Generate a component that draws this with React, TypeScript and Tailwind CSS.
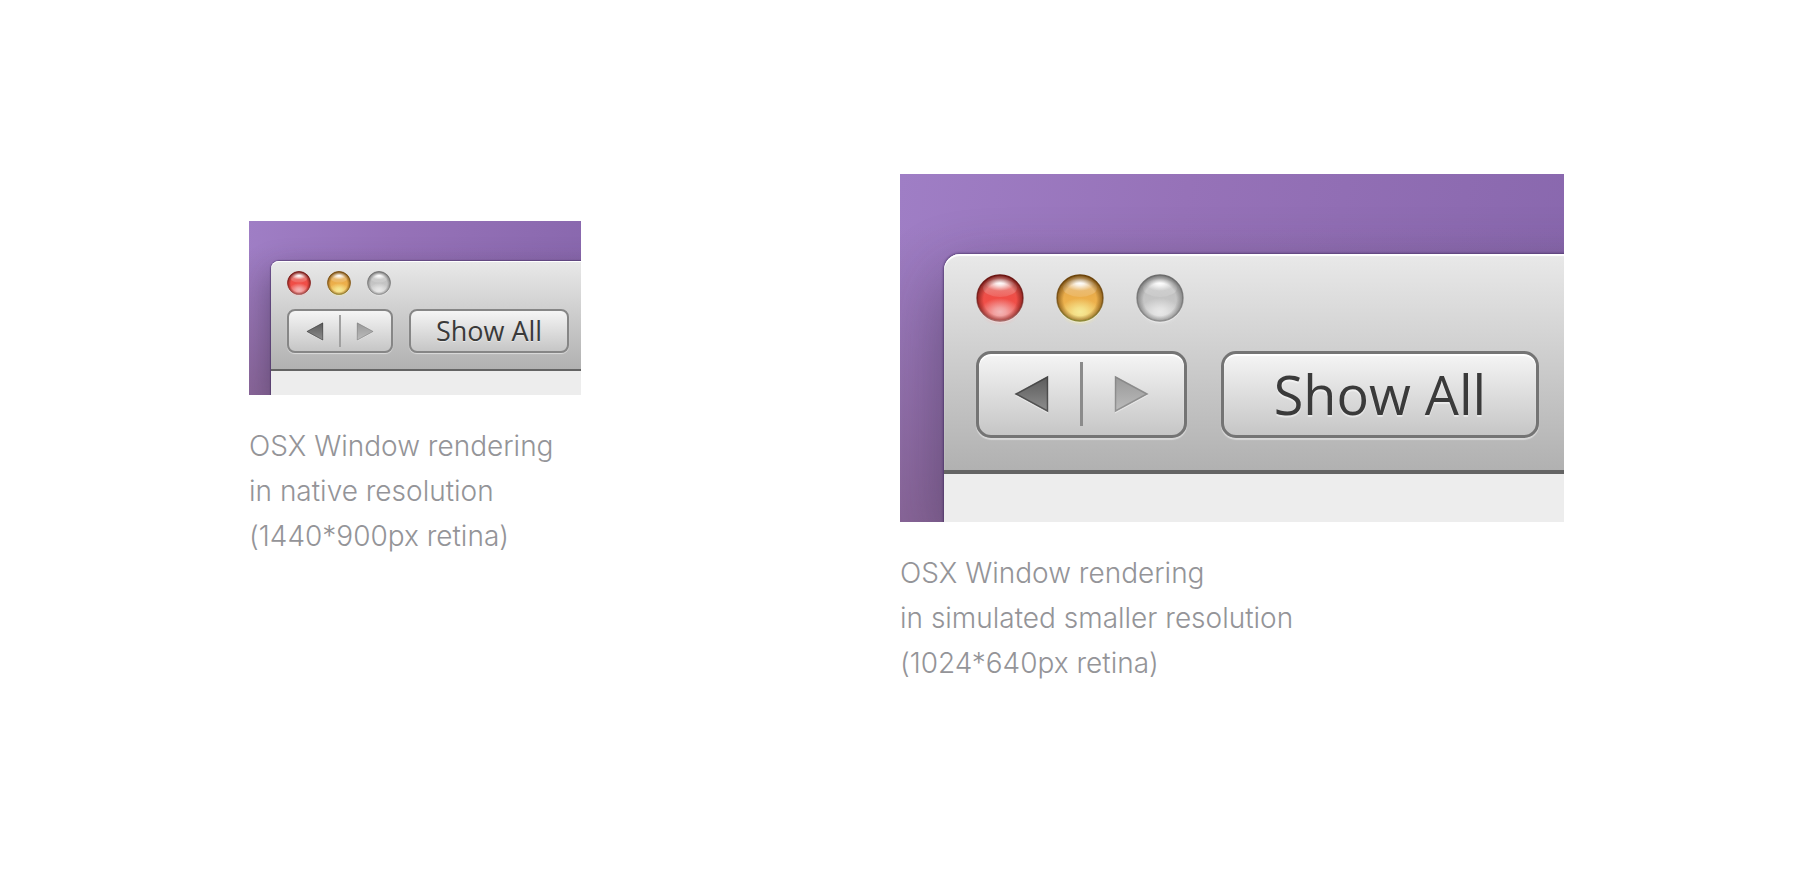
import { clsx } from "clsx";

type Size = "native" | "scaled";

type LightTone = {
  id: string;
  label: string;
  rim: string;
  rimLow: string;
  top: string;
  mid: string;
  low: string;
  glow: string;
};

const lights: LightTone[] = [
  { id: "close", label: "Close", rim: "#6b1512", rimLow: "#a86a68", top: "#d9605a", mid: "#f04d46", low: "#ee5a55", glow: "#f3b6b6" },
  { id: "minimize", label: "Minimize", rim: "#6b430a", rimLow: "#8f8a38", top: "#d9a04c", mid: "#ecae4a", low: "#efbc55", glow: "#f6ea96" },
  { id: "zoom", label: "Zoom", rim: "#6c6c6c", rimLow: "#909090", top: "#b8b8b8", mid: "#c4c4c4", low: "#cdcdcd", glow: "#e8e8e8" },
];

function TrafficLight({ tone, size }: { tone: LightTone; size: Size }) {
  const key = `${tone.id}-${size}`;
  return (
    <button type="button" aria-label={tone.label} className={clsx("block shrink-0", size === "native" ? "size-6" : "size-12")}>
      <svg viewBox="0 0 48 48" className="block size-full overflow-visible" aria-hidden="true">
        <defs>
          <linearGradient id={`body-${key}`} x1="0" y1="0" x2="0" y2="1">
            <stop offset="0" stopColor={tone.top} />
            <stop offset="0.5" stopColor={tone.mid} />
            <stop offset="1" stopColor={tone.low} />
          </linearGradient>
          <linearGradient id={`rim-${key}`} x1="0" y1="0" x2="0" y2="1">
            <stop offset="0" stopColor={tone.rim} />
            <stop offset="0.55" stopColor={tone.rim} stopOpacity="0.7" />
            <stop offset="1" stopColor={tone.rimLow} />
          </linearGradient>
          <radialGradient id={`edge-${key}`} cx="0.5" cy="0.53" r="0.52">
            <stop offset="0.68" stopColor={tone.rim} stopOpacity="0" />
            <stop offset="1" stopColor={tone.rim} stopOpacity="0.8" />
          </radialGradient>
          <radialGradient id={`glow-${key}`}>
            <stop offset="0" stopColor={tone.glow} />
            <stop offset="0.3" stopColor={tone.glow} stopOpacity="0.8" />
            <stop offset="1" stopColor={tone.glow} stopOpacity="0" />
          </radialGradient>
          <radialGradient id={`shine-${key}`}>
            <stop offset="0" stopColor="#fff" />
            <stop offset="0.3" stopColor="#fff" stopOpacity="0.8" />
            <stop offset="1" stopColor="#fff" stopOpacity="0" />
          </radialGradient>
          <linearGradient id={`sheen-${key}`} x1="0" y1="0" x2="0" y2="1">
            <stop offset="0" stopColor="#fff" stopOpacity="0.35" />
            <stop offset="1" stopColor="#fff" stopOpacity="0.12" />
          </linearGradient>
        </defs>
        <circle cx="24" cy="25.5" r="23.5" fill="#fff" opacity="0.4" />
        <circle cx="24" cy="24" r="23" fill={`url(#body-${key})`} />
        <ellipse cx="24" cy="38" rx="20" ry="14" fill={`url(#glow-${key})`} />
        <ellipse cx="24" cy="14" rx="17" ry="9" fill={`url(#sheen-${key})`} />
        <ellipse cx="24" cy="9" rx="15" ry="8" fill={`url(#shine-${key})`} />
        <circle cx="24" cy="24" r="23" fill={`url(#edge-${key})`} />
        <circle cx="24" cy="24" r="23" fill="none" stroke={`url(#rim-${key})`} strokeWidth="1.5" />
      </svg>
    </button>
  );
}

function Arrow({ direction, size }: { direction: "back" | "forward"; size: Size }) {
  const back = direction === "back";
  const id = `arrow-${direction}-${size}`;
  const points = back ? "1,19 34,1 34,37" : "33,19 0,1 0,37";
  return (
    <svg viewBox="0 0 34 38" className={clsx("block overflow-visible", size === "native" ? "h-[19px] w-[17px]" : "h-[38px] w-[34px]")} aria-hidden="true">
      <defs>
        <linearGradient id={id} x1="0" y1="0" x2="0" y2="1">
          <stop offset="0" stopColor={back ? "#5a5a5a" : "#989898"} />
          <stop offset="1" stopColor={back ? "#8e8e8e" : "#bcbcbc"} />
        </linearGradient>
      </defs>
      <polygon points={points} fill="#fff" opacity="0.4" transform="translate(0 1.5)" />
      <polygon points={points} fill={`url(#${id})`} />
      <polygon
        points={back ? "2,19 33.5,2 33.5,36" : "32,19 0.5,2 0.5,36"}
        fill="none"
        stroke={back ? "#3c3c3c" : "#808080"}
        strokeWidth="1.5"
        opacity="0.7"
      />
    </svg>
  );
}

function MacWindow({ size }: { size: Size }) {
  const native = size === "native";
  const control = clsx(
    "flex shrink-0 items-center bg-linear-to-b from-[#f5f5f5] to-[#c6c6c6]",
    native
      ? "h-11 rounded-lg border-2 border-[#868686] shadow-[0_1px_1px_rgba(255,255,255,0.5)]"
      : "h-[87px] rounded-[15px] border-3 border-[#747474] shadow-[0_2px_1px_rgba(255,255,255,0.45),inset_0_2px_1px_#fff]",
  );
  return (
    <div
      className={clsx(
        "w-full overflow-hidden bg-[linear-gradient(to_bottom,rgba(133,98,145,0)_15%,rgba(133,98,145,0.85)_100%),linear-gradient(100deg,#9f7ec5_0%,#9672b8_40%,#8867ad_100%)]",
        native ? "max-w-[332px] pt-10 pl-[22px]" : "max-w-[664px] pt-20 pl-11",
      )}
    >
      <div
        className={clsx(
          native
            ? "w-[360px] rounded-tl-lg shadow-[0_0_1px_1px_rgba(60,40,90,0.5),0_12px_32px_rgba(40,30,60,0.45)]"
            : "w-[720px] rounded-tl-2xl shadow-[0_0_2px_1px_rgba(60,40,90,0.6),0_24px_64px_rgba(40,30,60,0.45)]",
        )}
      >
        <div
          className={clsx(
            "border-[#646464] bg-linear-to-b from-[#e9e9e9] to-[#b1b1b1]",
            native
              ? "h-[110px] rounded-tl-lg border-b-2 pt-[10px] pl-4 shadow-[inset_0_1px_0_#fff]"
              : "h-[220px] rounded-tl-2xl border-b-4 pt-5 pl-8 shadow-[inset_0_2px_1px_#fff]",
          )}
        >
          <div className={clsx("flex", native ? "gap-4" : "gap-8")}>
            {lights.map((tone) => (
              <TrafficLight key={tone.id} tone={tone} size={size} />
            ))}
          </div>
          <div className={clsx("flex", native ? "mt-[14px] gap-4" : "mt-[29px] gap-[34px]")}>
            <div className={clsx(control, native ? "w-[106px]" : "w-[211px] pb-0.5")}>
              <button type="button" aria-label="Back" className={clsx("flex h-full flex-1 items-center justify-end", native ? "pr-4" : "pr-8")}>
                <Arrow direction="back" size={size} />
              </button>
              <span className={clsx(native ? "h-8 w-0.5 bg-[#a0a0a0]" : "h-16 w-[3px] bg-[#8b8b8b]")} />
              <button type="button" aria-label="Forward" className={clsx("flex h-full flex-1 items-center justify-start", native ? "pl-4" : "pl-8")}>
                <Arrow direction="forward" size={size} />
              </button>
            </div>
            <button
              type="button"
              className={clsx(
                control,
                "justify-center font-['Open_Sans',sans-serif] text-[#3a3a3a]",
                native
                  ? "w-40 text-[27px] leading-8 [text-shadow:0_1px_0_rgba(255,255,255,0.5)]"
                  : "w-[318px] pb-0.5 text-[54px] leading-16 [text-shadow:0_2px_1px_rgba(255,255,255,0.5)]",
              )}
            >
              Show All
            </button>
          </div>
        </div>
        <div className={clsx("bg-[#ededed]", native ? "h-6" : "h-12")} />
      </div>
    </div>
  );
}

function Example({ size, lines }: { size: Size; lines: string[] }) {
  return (
    <figure>
      <MacWindow size={size} />
      <figcaption className="mt-[29px] font-['Inter','Liberation_Sans',sans-serif] text-[28px] leading-[45px] font-light text-[#949498] [font-feature-settings:'calt'_0]">
        {lines.map((line) => (
          <span key={line} className="block">
            {line}
          </span>
        ))}
      </figcaption>
    </figure>
  );
}

export default function App() {
  return (
    <main className="grid min-h-screen grid-cols-2 items-start bg-white">
      <div className="pt-[221px] pl-[249px]">
        <Example size="native" lines={["OSX Window rendering", "in native resolution", "(1440*900px retina)"]} />
      </div>
      <div className="pt-[174px]">
        <Example size="scaled" lines={["OSX Window rendering", "in simulated smaller resolution", "(1024*640px retina)"]} />
      </div>
    </main>
  );
}
